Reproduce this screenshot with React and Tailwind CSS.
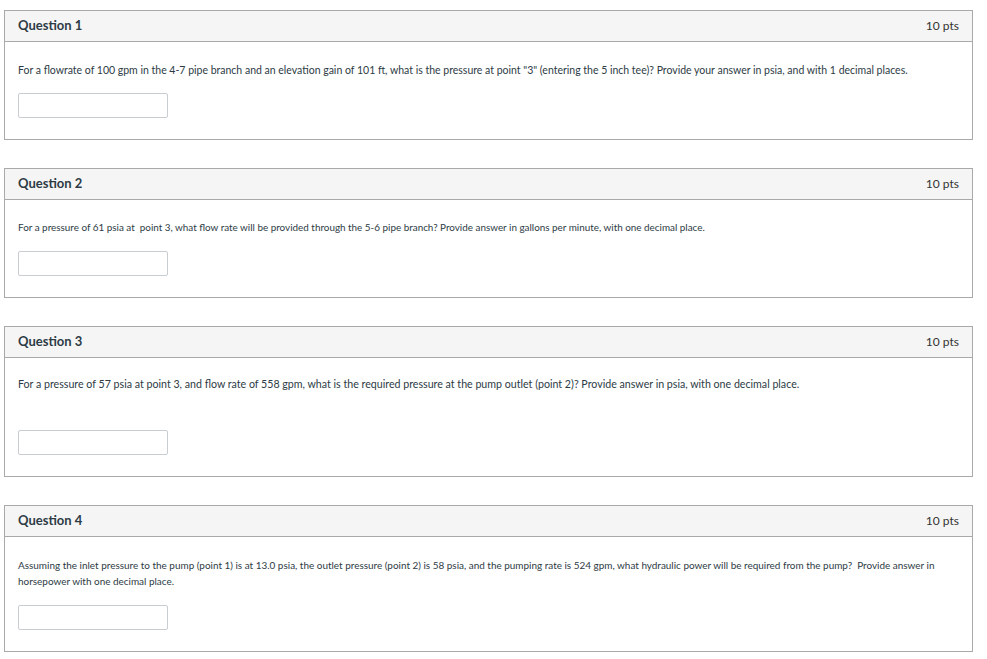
const questions = [
  {
    title: 'Question 1',
    pts: '10 pts',
    text: 'For a flowrate of 100 gpm in the 4-7 pipe branch and an elevation gain of 101 ft, what is the pressure at point "3" (entering the 5 inch tee)? Provide your answer in psia, and with 1 decimal places.',
    textClass: 'text-[10.5px] leading-[18px] pt-[19px] mb-[14px]',
  },
  {
    title: 'Question 2',
    pts: '10 pts',
    text: 'For a pressure of 61 psia at\u00a0 point 3, what flow rate will be provided through the 5-6 pipe branch? Provide answer in gallons per minute, with one decimal place.',
    textClass: 'text-[9.9px] leading-[16px] pt-[19px] mb-[16px]',
  },
  {
    title: 'Question 3',
    pts: '10 pts',
    text: 'For a pressure of 57 psia at point 3, and flow rate of 558 gpm, what is the required pressure at the pump outlet (point 2)? Provide answer in psia, with one decimal place.',
    textClass: 'text-[10.65px] leading-[18px] pt-[17px] mb-[37px]',
  },
  {
    title: 'Question 4',
    pts: '10 pts',
    text: (
      <>
        Assuming the inlet pressure to the pump (point 1) is at 13.0 psia, the outlet pressure (point 2) is 58 psia, and the pumping rate is 524 gpm, what hydraulic power will be required from the pump?&nbsp; Provide answer in
        <br />
        horsepower with one decimal place.
      </>
    ),
    textClass: 'text-[9.95px] leading-[16px] pt-[20px] mb-[16px]',
  },
]

function QuestionCard({ title, pts, text, textClass }) {
  return (
    <div className="border border-[#a9a9a9] bg-white">
      <div className="h-[31px] flex items-center justify-between px-[13px] bg-[#f5f5f5] border-b border-[#a9a9a9]">
        <span className="text-[13px] font-bold text-[#2d3b45]">{title}</span>
        <span className="text-[12px] text-[#333333]">{pts}</span>
      </div>
      <div className="px-[13px] pb-[21px]">
        <p className={`text-[#2d3b45] whitespace-nowrap ${textClass}`}>{text}</p>
        <input
          type="text"
          className="block w-[150px] h-[25px] border border-[#c7cdd1] rounded-[2px] bg-white outline-none"
        />
      </div>
    </div>
  )
}

export default function App() {
  return (
    <div className="min-h-screen bg-white pt-[10px] pl-[4px] pr-[14px]" style={{ fontFamily: 'Lato, "Open Sans", sans-serif' }}>
      <div className="flex flex-col gap-[28px]">
        {questions.map((q, i) => (
          <QuestionCard key={i} {...q} />
        ))}
      </div>
    </div>
  )
}
